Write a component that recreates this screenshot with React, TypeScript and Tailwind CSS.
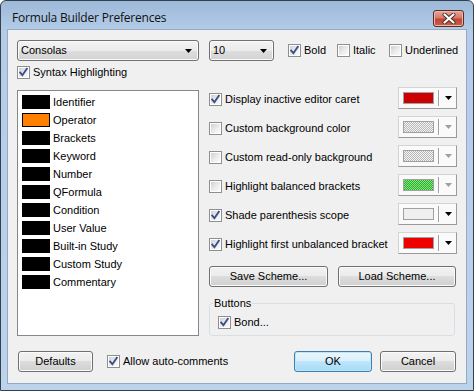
import React from "react";

function Check({ checked, label, className = "" }: { checked?: boolean; label: string; className?: string }) {
  return (
    <div className={"flex items-center " + className}>
      <div className="relative w-[13px] h-[13px] shrink-0 border border-[#8e8f8f] bg-white p-[1px]">
        <div className="w-full h-full bg-[linear-gradient(135deg,#cfd1d4,#eeeeef_60%,#fafafa)]" />
        {checked && (
          <svg className="absolute left-0 top-0" width="11" height="11" viewBox="0 0 11 11">
            <path d="M2.2 5.6 L4.4 8.2 L8.8 1.8" fill="none" stroke="#3d4f8c" strokeWidth="1.9" strokeLinecap="square" />
          </svg>
        )}
      </div>
      <span className="ml-[3px] text-[11px] leading-[13px] text-black whitespace-nowrap">{label}</span>
    </div>
  );
}

function Combo({ text, className = "" }: { text: string; className?: string }) {
  return (
    <div
      className={
        "h-[21px] rounded-[3px] border border-[#707070] bg-[linear-gradient(to_bottom,#f3f3f3_0%,#ebebeb_50%,#dedede_50%,#d2d2d2_100%)] shadow-[inset_0_0_0_1px_#fbfbfb] flex items-center justify-between pl-[3px] pr-[6px] " +
        className
      }
    >
      <span className="text-[11px] text-black">{text}</span>
      <svg width="7" height="4" viewBox="0 0 7 4">
        <path d="M0 0 H7 L3.5 4 Z" fill="#000" />
      </svg>
    </div>
  );
}

function Button({ text, className = "", def = false }: { text: string; className?: string; def?: boolean }) {
  return (
    <div
      className={
        "h-[21px] rounded-[3px] border flex items-center justify-center text-[11px] text-black " +
        (def
          ? "border-[#3c7fb1] bg-[linear-gradient(to_bottom,#eaf6fd_0%,#d9f0fc_50%,#bee6fd_50%,#a7d9f5_100%)] shadow-[inset_0_0_0_1px_#c4e5f6] "
          : "border-[#707070] bg-[linear-gradient(to_bottom,#f2f2f2_0%,#ebebeb_50%,#dddddd_50%,#cfcfcf_100%)] shadow-[inset_0_0_0_1px_#fbfbfb] ") +
        className
      }
    >
      {text}
    </div>
  );
}

function ColorCombo({ swatch, enabled }: { swatch: string; enabled: boolean }) {
  return (
    <div className="h-[22px] w-[59px] border border-[#d4d4d4] border-r-[#9a9a9a] border-b-[#9a9a9a] bg-[#fafafa] flex items-center pl-[4px]">
      <div className={"w-[31px] h-[12px] border border-[#a0a0a0] " + swatch} />
      <div className="ml-[4px] w-[1px] h-[16px] bg-[#a0a0a0] border-r border-white box-content" />
      <svg className="ml-[5px]" width="7" height="4" viewBox="0 0 7 4">
        <path d="M0 0 H7 L3.5 4 Z" fill={enabled ? "#000" : "#a0a0a0"} />
      </svg>
    </div>
  );
}

const items: [string, string][] = [
  ["Identifier", "bg-black"],
  ["Operator", "bg-[#ff8000]"],
  ["Brackets", "bg-black"],
  ["Keyword", "bg-black"],
  ["Number", "bg-black"],
  ["QFormula", "bg-black"],
  ["Condition", "bg-black"],
  ["User Value", "bg-black"],
  ["Built-in Study", "bg-black"],
  ["Custom Study", "bg-black"],
  ["Commentary", "bg-black"],
];

const grayDither = "bg-[repeating-conic-gradient(#b8b8b8_0%_25%,#f4f4f4_0%_50%)] bg-[length:2px_2px]";
const greenDither = "bg-[repeating-conic-gradient(#1fb81f_0%_25%,#8fdc8f_0%_50%)] bg-[length:2px_2px]";

const rows: { label: string; checked: boolean; swatch: string; enabled: boolean }[] = [
  { label: "Display inactive editor caret", checked: true, swatch: "bg-[#cc0000]", enabled: true },
  { label: "Custom background color", checked: false, swatch: grayDither, enabled: false },
  { label: "Custom read-only background", checked: false, swatch: grayDither, enabled: false },
  { label: "Highlight balanced brackets", checked: false, swatch: greenDither, enabled: false },
  { label: "Shade parenthesis scope", checked: true, swatch: "bg-[#efefef]", enabled: true },
  { label: "Highlight first unbalanced bracket", checked: true, swatch: "bg-[#ee0000]", enabled: true },
];

export default function App() {
  return (
    <div className="w-[474px] h-[391px] font-['Liberation_Sans',Arial,sans-serif] bg-white">
      <div className="w-[474px] h-[391px] flex flex-col border border-[#34404f] rounded-t-[6px] overflow-hidden bg-[linear-gradient(to_bottom,#9db9d9_0px,#b4cce8_30px,#bcd3ec_100%)]">
        <div className="h-[29px] shrink-0 flex items-start justify-between pl-[11px] pr-[9px]">
          <span className="mt-[9px] text-[12px] leading-[15px] text-[#111] font-['Open_Sans',sans-serif] tracking-[-0.2px]">
            Formula Builder Preferences
          </span>
          <div className="mt-[9px] w-[31px] h-[17px] rounded-[3px] border border-[#5a2a24] bg-[linear-gradient(to_bottom,#e3a99b_0%,#d47a68_45%,#c2452f_55%,#c9604a_100%)] shadow-[inset_0_0_0_1px_#e9b7ab] flex items-center justify-center">
            <svg width="14" height="11" viewBox="0 0 14 11">
              <path d="M2.5 1.5 L11.5 9.5 M11.5 1.5 L2.5 9.5" stroke="#4a2a2a" strokeWidth="4" strokeLinecap="round" />
              <path d="M2.5 1.5 L11.5 9.5 M11.5 1.5 L2.5 9.5" stroke="#fff" strokeWidth="2.2" strokeLinecap="round" />
            </svg>
          </div>
        </div>
        <div className="mx-[7px] mb-[7px] flex-1 bg-[#f0f0f0] shadow-[0_0_0_1px_#94a9c4] flex flex-col">
          {/* row 1 */}
          <div className="mt-[10px] ml-[9px] flex items-center h-[21px]">
            <Combo text="Consolas" className="w-[182px]" />
            <Combo text="10" className="w-[65px] ml-[10px]" />
            <Check checked label="Bold" className="ml-[14px] w-[49px]" />
            <Check label="Italic" className="w-[52px]" />
            <Check label="Underlined" />
          </div>
          {/* row 2 */}
          <div className="mt-[5px] ml-[9px]">
            <Check checked label="Syntax Highlighting" />
          </div>
          {/* main */}
          <div className="mt-[8px] flex">
            <div className="ml-[9px] mt-[3px] w-[182px] h-[246px] border border-[#828790] bg-white pt-[2px] pl-[4px]">
              {items.map(([name, c]) => (
                <div key={name} className="h-[18px] flex items-center">
                  <div className={"w-[28px] h-[14px] border border-black " + c} />
                  <span className="ml-[3px] text-[11px] text-black">{name}</span>
                </div>
              ))}
            </div>
            <div className="ml-[10px] w-[248px] flex flex-col">
              <div className="flex flex-col gap-[7px]">
                {rows.map((r) => (
                  <div key={r.label} className="h-[22px] flex items-center justify-between">
                    <Check checked={r.checked} label={r.label} className="mt-[3px]" />
                    <ColorCombo swatch={r.swatch} enabled={r.enabled} />
                  </div>
                ))}
              </div>
              <div className="mt-[12px] flex">
                <Button text="Save Scheme..." className="w-[119px]" />
                <Button text="Load Scheme..." className="w-[118px] ml-[10px]" />
              </div>
              <div className="relative mt-[16px] w-[246px] h-[33px] border border-[#d5dfe5] rounded-[3px]">
                <span className="absolute left-[3px] top-[-7px] px-[1px] bg-[#f0f0f0] text-[11px] leading-[13px] text-black">Buttons</span>
                <Check checked label="Bond..." className="absolute left-[8px] top-[12px]" />
              </div>
            </div>
          </div>
          {/* bottom */}
          <div className="mt-[15px] flex items-center">
            <Button text="Defaults" className="ml-[10px] w-[75px]" />
            <Check checked label="Allow auto-comments" className="ml-[14px]" />
            <Button text="OK" def className="ml-auto w-[78px]" />
            <Button text="Cancel" className="ml-[8px] mr-[10px] w-[76px]" />
          </div>
        </div>
      </div>
    </div>
  );
}
